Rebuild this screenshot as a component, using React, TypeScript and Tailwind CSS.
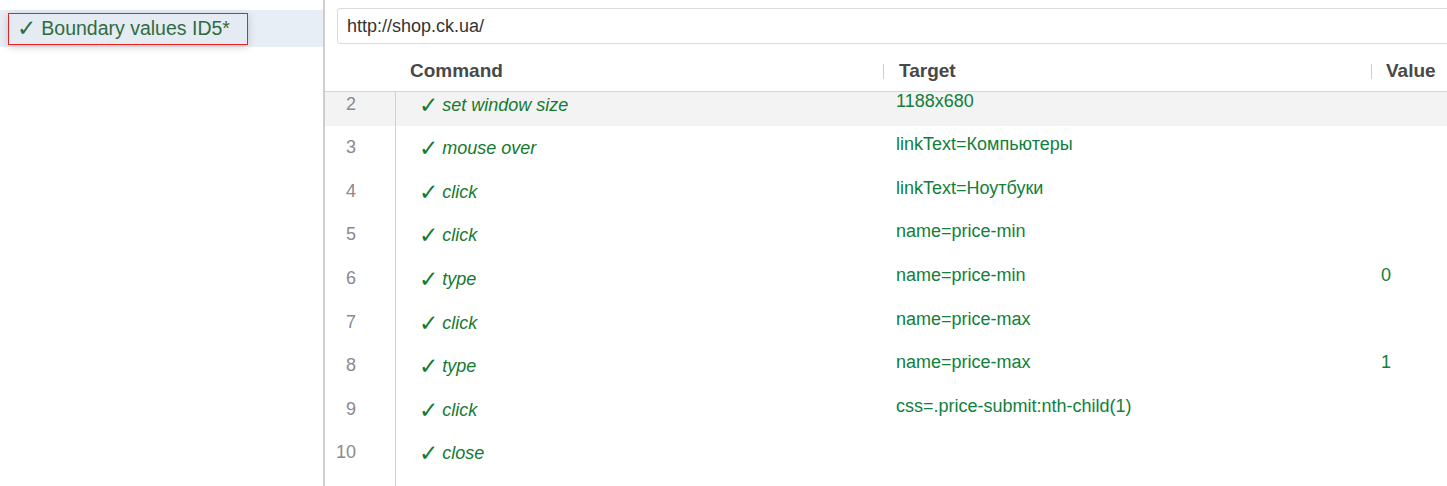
import React from "react";

type Step = { n: number; cmd: string; target?: string; value?: string };

const steps: Step[] = [
  { n: 2, cmd: "set window size", target: "1188x680" },
  { n: 3, cmd: "mouse over", target: "linkText=Компьютеры" },
  { n: 4, cmd: "click", target: "linkText=Ноутбуки" },
  { n: 5, cmd: "click", target: "name=price-min" },
  { n: 6, cmd: "type", target: "name=price-min", value: "0" },
  { n: 7, cmd: "click", target: "name=price-max" },
  { n: 8, cmd: "type", target: "name=price-max", value: "1" },
  { n: 9, cmd: "click", target: "css=.price-submit:nth-child(1)" },
  { n: 10, cmd: "close" },
];

export default function App() {
  return (
    <div
      className="flex h-[486px] w-[1447px] overflow-hidden bg-white"
      style={{ fontFamily: "'Liberation Sans', Arial, sans-serif" }}
    >
      {/* Test list */}
      <div className="w-[325px] shrink-0 border-r-2 border-[#cdcdcd] pt-[10px]">
        <div className="flex h-[37px] items-center bg-[#e7eef5] pl-[8px]">
          <div className="flex h-[32px] w-[240px] items-center border border-[#e8231f] bg-[#e4ebf2] pl-[8px] text-[19.5px] text-[#2f6c40] shadow-[0_2px_8px_rgba(0,0,0,0.18)]">
            <span style={{ fontFamily: "'DejaVu Sans', sans-serif" }} className="text-[23px] leading-none">✓</span>
            <span className="ml-[5px]">Boundary values ID5*</span>
          </div>
        </div>
      </div>

      {/* Editor */}
      <div className="flex min-w-0 flex-1 flex-col">
        <div className="ml-[12px] mr-[-10px] mt-[8px] flex h-[36px] items-center rounded-[3px] border border-[#dcdcdc] pl-[9px] text-[18px] text-[#333]">
          http://shop.ck.ua/
        </div>

        <div className="grid h-[48px] grid-cols-[71px_487px_488px_1fr] items-center border-b border-[#d6d6d6] text-[19px] font-bold text-[#484848]">
          <div />
          <div className="pl-[14px] pt-[7px]">Command</div>
          <div className="flex items-center pt-[7px]">
            <span className="mr-[15px] h-[15px] w-px bg-[#cfcfcf]" />
            Target
          </div>
          <div className="flex items-center pt-[7px]">
            <span className="mr-[14px] h-[15px] w-px bg-[#cfcfcf]" />
            Value
          </div>
        </div>

        <div className="flex flex-1 flex-col overflow-hidden">
          <div className="mt-[-9.6px]">
            {steps.map((s) => (
              <div
                key={s.n}
                className={`grid h-[43.6px] grid-cols-[71px_487px_488px_1fr] ${s.n === 2 ? "bg-[#f3f3f3]" : ""}`}
              >
                <div className="flex items-center justify-end border-r border-[#d0d0d0] pr-[39px] text-[18px] text-[#8a8a8a]">
                  {s.n}
                </div>
                <div className="flex items-center pl-[23px] pt-[2px] text-[18px] italic text-[#137a2f]">
                  <span style={{ fontFamily: "'DejaVu Sans', sans-serif" }} className="text-[23px] not-italic leading-none">✓</span>
                  <span className="ml-[4px]">{s.cmd}</span>
                </div>
                <div className="flex items-center pb-[6px] pl-[13px] text-[18px] text-[#10803a]">
                  {s.target}
                </div>
                <div className="flex items-center pb-[6px] pl-[10px] text-[18px] text-[#10803a]">
                  {s.value}
                </div>
              </div>
            ))}
          </div>
          <div className="grid flex-1 grid-cols-[71px_1fr]">
            <div className="border-r border-[#d0d0d0]" />
            <div />
          </div>
        </div>
      </div>
    </div>
  );
}
